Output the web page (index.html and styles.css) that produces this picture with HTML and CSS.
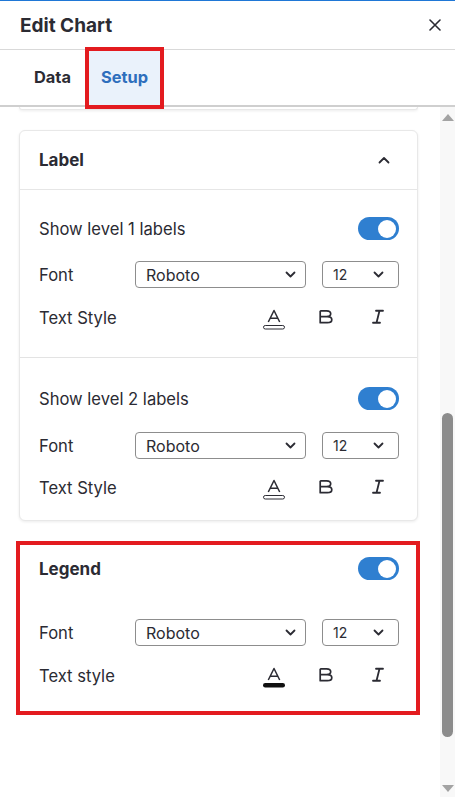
FILE: index.html
```html
<!DOCTYPE html>
<html>
<head>
<meta charset="utf-8">
<link rel="stylesheet" href="styles.css">
</head>
<body>
<div class="panel">
  <header class="head">
    <h1 class="title">Edit Chart</h1>
    <button class="close" aria-label="Close">
      <svg width="12" height="12" viewBox="0 0 12 12"><path d="M1 1L11 11M11 1L1 11" stroke="#2b2b33" stroke-width="1.6" stroke-linecap="round"/></svg>
    </button>
  </header>
  <nav class="tabs">
    <div class="tab">Data</div>
    <div class="tab tab-active">Setup<span class="annot annot-tab"></span></div>
  </nav>
  <div class="body">
    <div class="content">
      <div class="card card-prev"></div>

      <section class="card">
        <div class="card-head">
          <span class="card-title">Label</span>
          <svg class="chev-up" width="12" height="8" viewBox="0 0 12 8"><path d="M1.5 6.5L6 2L10.5 6.5" fill="none" stroke="#2b2b33" stroke-width="1.8" stroke-linecap="round" stroke-linejoin="round"/></svg>
        </div>
        <div class="sec">
          <div class="row">
            <span class="lbl">Show level 1 labels</span>
            <span class="toggle"><span class="knob"></span></span>
          </div>
          <div class="row row-font">
            <span class="lbl lbl-w">Font</span>
            <div class="select sel-font"><span>Roboto</span><svg width="11" height="7" viewBox="0 0 11 7"><path d="M1.5 1.5L5.5 5.5L9.5 1.5" fill="none" stroke="#2b2b33" stroke-width="1.8" stroke-linecap="round" stroke-linejoin="round"/></svg></div>
            <div class="select sel-size"><span>12</span><svg width="11" height="7" viewBox="0 0 11 7"><path d="M1.5 1.5L5.5 5.5L9.5 1.5" fill="none" stroke="#2b2b33" stroke-width="1.8" stroke-linecap="round" stroke-linejoin="round"/></svg></div>
          </div>
          <div class="row row-style">
            <span class="lbl">Text Style</span>
            <div class="icons">
              <svg class="ic" width="24" height="24" viewBox="0 0 24 24"><path d="M6.3 16L12 4.5L17.7 16M8.2 12.3H15.8" fill="none" stroke="#2b2b33" stroke-width="1.5" stroke-linejoin="round"/><rect x="1.5" y="19.5" width="21" height="3.5" rx="1.75" fill="none" stroke="#2b2b33" stroke-width="1"/></svg>
              <svg class="ic" width="24" height="24" viewBox="0 0 24 24"><path d="M6.2 4.8H12.6C15.3 4.8 16.7 6 16.7 7.8C16.7 9.6 15.3 10.6 12.6 10.6H6.2M6.2 10.6H13.3C16.3 10.6 17.8 11.9 17.8 13.7C17.8 15.5 16.3 16.7 13.3 16.7H6.2V4.8" fill="none" stroke="#2b2b33" stroke-width="1.7" stroke-linejoin="round"/></svg>
              <svg class="ic" width="24" height="24" viewBox="0 0 24 24"><path d="M10 4.75H17M7 16.75H14M13.5 4.75L10.5 16.75" fill="none" stroke="#2b2b33" stroke-width="1.8" stroke-linecap="round"/></svg>
            </div>
          </div>
        </div>
        <div class="sec sec-2">
          <div class="row">
            <span class="lbl">Show level 2 labels</span>
            <span class="toggle"><span class="knob"></span></span>
          </div>
          <div class="row row-font">
            <span class="lbl lbl-w">Font</span>
            <div class="select sel-font"><span>Roboto</span><svg width="11" height="7" viewBox="0 0 11 7"><path d="M1.5 1.5L5.5 5.5L9.5 1.5" fill="none" stroke="#2b2b33" stroke-width="1.8" stroke-linecap="round" stroke-linejoin="round"/></svg></div>
            <div class="select sel-size"><span>12</span><svg width="11" height="7" viewBox="0 0 11 7"><path d="M1.5 1.5L5.5 5.5L9.5 1.5" fill="none" stroke="#2b2b33" stroke-width="1.8" stroke-linecap="round" stroke-linejoin="round"/></svg></div>
          </div>
          <div class="row row-style">
            <span class="lbl">Text Style</span>
            <div class="icons">
              <svg class="ic" width="24" height="24" viewBox="0 0 24 24"><path d="M6.3 16L12 4.5L17.7 16M8.2 12.3H15.8" fill="none" stroke="#2b2b33" stroke-width="1.5" stroke-linejoin="round"/><rect x="1.5" y="19.5" width="21" height="3.5" rx="1.75" fill="none" stroke="#2b2b33" stroke-width="1"/></svg>
              <svg class="ic" width="24" height="24" viewBox="0 0 24 24"><path d="M6.2 4.8H12.6C15.3 4.8 16.7 6 16.7 7.8C16.7 9.6 15.3 10.6 12.6 10.6H6.2M6.2 10.6H13.3C16.3 10.6 17.8 11.9 17.8 13.7C17.8 15.5 16.3 16.7 13.3 16.7H6.2V4.8" fill="none" stroke="#2b2b33" stroke-width="1.7" stroke-linejoin="round"/></svg>
              <svg class="ic" width="24" height="24" viewBox="0 0 24 24"><path d="M10 4.75H17M7 16.75H14M13.5 4.75L10.5 16.75" fill="none" stroke="#2b2b33" stroke-width="1.8" stroke-linecap="round"/></svg>
            </div>
          </div>
        </div>
      </section>

      <section class="legend">
        <div class="row">
          <span class="card-title">Legend</span>
          <span class="toggle"><span class="knob"></span></span>
        </div>
        <div class="row row-font legend-font">
          <span class="lbl lbl-w">Font</span>
          <div class="select sel-font"><span>Roboto</span><svg width="11" height="7" viewBox="0 0 11 7"><path d="M1.5 1.5L5.5 5.5L9.5 1.5" fill="none" stroke="#2b2b33" stroke-width="1.8" stroke-linecap="round" stroke-linejoin="round"/></svg></div>
          <div class="select sel-size"><span>12</span><svg width="11" height="7" viewBox="0 0 11 7"><path d="M1.5 1.5L5.5 5.5L9.5 1.5" fill="none" stroke="#2b2b33" stroke-width="1.8" stroke-linecap="round" stroke-linejoin="round"/></svg></div>
        </div>
        <div class="row row-style">
          <span class="lbl">Text style</span>
          <div class="icons">
            <svg class="ic" width="24" height="24" viewBox="0 0 24 24"><path d="M6.3 16L12 4.5L17.7 16M8.2 12.3H15.8" fill="none" stroke="#2b2b33" stroke-width="1.5" stroke-linejoin="round"/><rect x="1" y="19" width="22" height="4.5" rx="2.25" fill="#111"/></svg>
            <svg class="ic" width="24" height="24" viewBox="0 0 24 24"><path d="M6.2 4.8H12.6C15.3 4.8 16.7 6 16.7 7.8C16.7 9.6 15.3 10.6 12.6 10.6H6.2M6.2 10.6H13.3C16.3 10.6 17.8 11.9 17.8 13.7C17.8 15.5 16.3 16.7 13.3 16.7H6.2V4.8" fill="none" stroke="#2b2b33" stroke-width="1.7" stroke-linejoin="round"/></svg>
            <svg class="ic" width="24" height="24" viewBox="0 0 24 24"><path d="M10 4.75H17M7 16.75H14M13.5 4.75L10.5 16.75" fill="none" stroke="#2b2b33" stroke-width="1.8" stroke-linecap="round"/></svg>
          </div>
        </div>
      </section>
    </div>
    <div class="scrollbar">
      <span class="arrow-up"></span>
      <div class="track"><div class="thumb"></div></div>
      <span class="arrow-down"></span>
    </div>
  </div>
</div>
</body>
</html>
```

FILE: styles.css
```css
* { box-sizing: border-box; }
html, body { margin: 0; padding: 0; }
body {
  width: 455px;
  height: 797px;
  overflow: hidden;
  background: #fff;
  font-family: Inter, "Noto Sans", sans-serif;
  color: #2b2b33;
}
.panel {
  height: 797px;
  display: flex;
  flex-direction: column;
  border-top: 1px solid #1f77d6;
}
.head {
  height: 49px;
  flex: none;
  display: flex;
  align-items: center;
  justify-content: space-between;
  padding: 0 14px 0 20px;
  border-bottom: 1px solid #d9d9d9;
}
.title {
  margin: 0;
  font-size: 19px;
  font-weight: 700;
  color: #2b2b33;
}
.close {
  border: 0;
  background: none;
  padding: 0;
  width: 12px;
  height: 12px;
  display: flex;
}
.tabs {
  flex: none;
  height: 57px;
  display: flex;
  gap: 4px;
  padding-left: 21px;
  border-bottom: 2px solid #cfcfcf;
}
.tab {
  position: relative;
  display: flex;
  align-items: center;
  padding: 0 13px 2px 13px;
  font-size: 16.4px;
  font-weight: 700;
  color: #2b2b33;
}
.tab-active {
  color: #2e6fbd;
  background: #eaf2fb;
}
.annot {
  position: absolute;
  border: 4.5px solid #e31b1f;
  pointer-events: none;
}
.annot-tab {
  left: -3px;
  right: -3px;
  top: -3px;
  bottom: -4px;
}
.body {
  flex: 1;
  display: flex;
  min-height: 0;
}
.content {
  flex: 1;
  overflow: hidden;
  padding: 0 22px 0 19px;
  display: flex;
  flex-direction: column;
}
.card {
  flex: none;
  background: #fff;
  border: 1px solid #e8e8e8;
  border-radius: 6px;
  box-shadow: 0 1px 3px rgba(0,0,0,0.08);
}
.card-prev {
  height: 3px;
  border-top: 0;
  border-radius: 0 0 6px 6px;
  margin-bottom: 20px;
}
.card-head {
  height: 59px;
  display: flex;
  align-items: center;
  justify-content: space-between;
  padding: 0 27px 0 19px;
  border-bottom: 1px solid #e6e6e6;
}
.card-title {
  font-size: 17px;
  font-weight: 700;
  color: #2b2b33;
}
.sec {
  padding: 27px 18px 27px 19px;
  display: flex;
  flex-direction: column;
}
.sec + .sec { border-top: 1px solid #e3e3e3; }
.sec-2 { padding-top: 29px; padding-bottom: 20px; }
.row {
  display: flex;
  align-items: center;
  justify-content: space-between;
}
.row > .toggle { margin-left: auto; }
.row-font {
  margin-top: 21px;
  justify-content: flex-start;
}
.sec-2 .row-font { margin-top: 22px; }
.row-style { margin-top: 18px; }
.sec-2 .row-style { margin-top: 17px; }
.lbl {
  font-size: 16.6px;
  color: #2b2b33;
}
.lbl-w { width: 96px; flex: none; }
.toggle {
  width: 41px;
  height: 23px;
  border-radius: 12px;
  background: #2f7fd0;
  display: flex;
  align-items: center;
  justify-content: flex-end;
  padding-right: 3px;
}
.knob {
  width: 18px;
  height: 18px;
  border-radius: 50%;
  background: #fff;
}
.select {
  height: 27px;
  border: 1px solid #8d8d8d;
  border-radius: 4px;
  display: flex;
  align-items: center;
  justify-content: space-between;
  color: #2b2b33;
}
.sel-font {
  width: 171px;
  padding: 0 9px 0 10px;
  font-size: 16px;
}
.sel-size {
  width: 77px;
  margin-left: 16px;
  padding: 0 14px 0 10px;
  font-size: 14px;
}
.icons {
  display: flex;
  gap: 28px;
  padding-right: 9px;
}
.ic { display: block; }
.legend {
  flex: none;
  margin: 20px -2px 0 -3px;
  border: 4px solid #e31b1f;
  padding: 12px 17px 23px 19px;
  display: flex;
  flex-direction: column;
}
.legend .legend-font { margin-top: 39px; }
.legend .row-style { margin-top: 18px; }
.scrollbar {
  width: 15px;
  flex: none;
  background: #f8f8f8;
  display: flex;
  flex-direction: column;
  align-items: center;
  padding: 7px 0 5px;
}
.arrow-up, .arrow-down {
  width: 0;
  height: 0;
  border-left: 6px solid transparent;
  border-right: 6px solid transparent;
  flex: none;
}
.arrow-up { border-bottom: 7px solid #a3a3a3; }
.arrow-down { border-top: 7px solid #a3a3a3; }
.track {
  flex: 1;
  width: 100%;
  display: flex;
  flex-direction: column;
  justify-content: flex-end;
  align-items: center;
  padding: 0 0 48px;
}
.thumb {
  width: 11px;
  height: 324px;
  border-radius: 6px;
  background: #8c8c8c;
}
```
